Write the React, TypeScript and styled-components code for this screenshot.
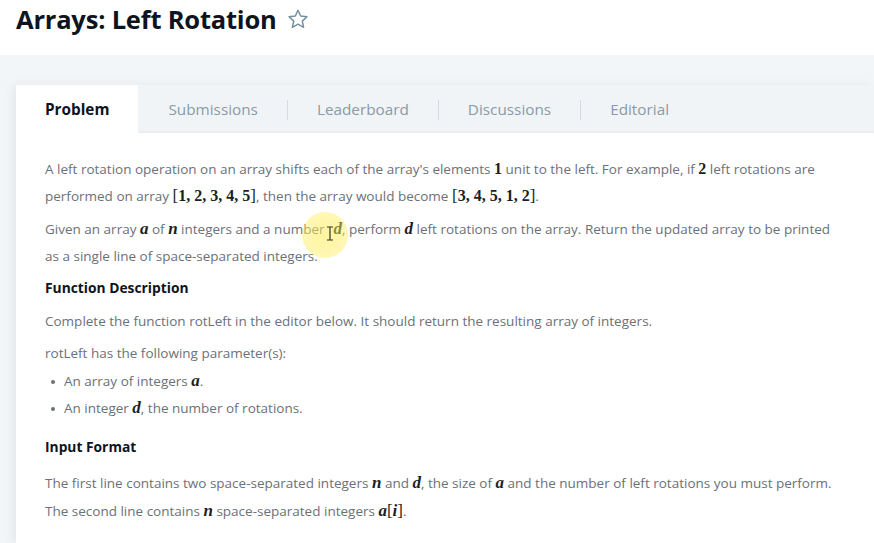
import React from "react";
import styled, { createGlobalStyle } from "styled-components";

const Global = createGlobalStyle`
  html, body { margin: 0; padding: 0; background: #f3f6f8; }
  body { font-family: "Open Sans", "Noto Sans", sans-serif; -webkit-font-smoothing: antialiased; overflow: hidden; }
`;

const Page = styled.div`
  width: 874px;
  height: 543px;
  overflow: hidden;
  display: flex;
  flex-direction: column;
  background: #f3f6f8;
`;

const Header = styled.header`
  flex: 0 0 55px;
  height: 55px;
  background: #ffffff;
  display: flex;
  align-items: flex-start;
  gap: 10px;
  padding: 2px 0 0 16px;
  box-sizing: border-box;
`;

const Title = styled.h1`
  margin: 0;
  font-size: 25.5px;
  line-height: 34px;
  font-weight: 700;
  color: #0e141e;
  letter-spacing: -0.2px;
`;

const StarBtn = styled.span`
  display: flex;
  padding-top: 6px;
  color: #738f9f;
`;

const Main = styled.main`
  flex: 1 0 auto;
  padding: 30px 0 0 16px;
  display: flex;
`;

const Panel = styled.section`
  flex: 1;
  background: #ffffff;
  box-shadow: -4px 0 10px rgba(0, 0, 0, 0.06);
  display: flex;
  flex-direction: column;
`;

const TabBar = styled.nav`
  flex: 0 0 48px;
  height: 48px;
  display: flex;
  align-items: center;
  background: #f1f4f6;
  box-shadow: inset 0 -3px 3px -2px rgba(0, 0, 0, 0.05);
`;

const Tab = styled.div<{ $active?: boolean; $sep?: boolean }>`
  position: relative;
  height: 100%;
  display: flex;
  align-items: center;
  padding: 0 29px 0 ${(p) => (p.$active ? 29 : 30)}px;
  font-size: 15.3px;
  font-weight: ${(p) => (p.$active ? 700 : 400)};
  color: ${(p) => (p.$active ? "#0e141e" : "#8a9aa6")};
  background: ${(p) => (p.$active ? "#ffffff" : "transparent")};
  &::before {
    content: "";
    display: ${(p) => (p.$sep ? "block" : "none")};
    position: absolute;
    left: 0;
    top: 15px;
    height: 20px;
    width: 1px;
    background: #d5dce1;
  }
`;

const Content = styled.div`
  padding: 23px 36px 0 29px;
  color: #6b7179;
  font-size: 13.5px;
  line-height: 27px;
`;

const Para = styled.p<{ $gap?: number }>`
  margin: 0 0 ${(p) => (p.$gap ?? 6)}px 0;
`;

const Heading = styled.h3<{ $top?: number; $bottom?: number }>`
  margin: ${(p) => (p.$top ?? 0)}px 0 ${(p) => (p.$bottom ?? 7)}px 0;
  font-size: 13.8px;
  line-height: 27px;
  font-weight: 700;
  color: #0e141e;
`;

const List = styled.ul`
  margin: 0;
  padding: 0 0 0 19px;
  list-style: none;
`;

const Item = styled.li`
  position: relative;
  &::before {
    content: "";
    position: absolute;
    left: -13px;
    top: 12px;
    width: 4px;
    height: 4px;
    border-radius: 50%;
    background: #6b7179;
  }
`;

const MathVar = styled.span`
  font-family: "Liberation Serif", "Times New Roman", serif;
  font-style: italic;
  font-weight: 700;
  font-size: 17px;
  line-height: 1;
  color: #1b1f24;
`;

const MathNum = styled.span`
  font-family: "Liberation Serif", "Times New Roman", serif;
  font-weight: 700;
  font-size: 16px;
  line-height: 1;
  color: #1b1f24;
`;

const Bracket = styled.span`
  font-family: "Liberation Serif", "Times New Roman", serif;
  font-weight: 400;
  font-size: 17px;
  line-height: 1;
  color: #1b1f24;
`;

const CursorAnchor = styled.span`
  position: relative;
  display: inline-block;
  width: 9px;
  height: 1px;
`;

const Highlight = styled.span`
  position: absolute;
  left: -23px;
  top: -21px;
  width: 46px;
  height: 46px;
  border-radius: 50%;
  background: radial-gradient(circle, rgba(255, 236, 80, 0.55) 0%, rgba(255, 238, 90, 0.45) 70%, rgba(255, 240, 120, 0) 100%);
  pointer-events: none;
`;

const IBeam = styled.svg`
  position: absolute;
  left: 1px;
  top: -7px;
`;

const Star = () => (
  <svg width="22" height="22" viewBox="0 0 24 24" fill="none" stroke="currentColor" strokeWidth="1.6" strokeLinejoin="round">
    <polygon points="12,2.5 14.9,8.8 21.8,9.6 16.7,14.3 18.1,21.1 12,17.7 5.9,21.1 7.3,14.3 2.2,9.6 9.1,8.8" />
  </svg>
);

const tabs = ["Problem", "Submissions", "Leaderboard", "Discussions", "Editorial"];

export default function App() {
  return (
    <Page>
      <Global />
      <Header>
        <Title>Arrays: Left Rotation</Title>
        <StarBtn>
          <Star />
        </StarBtn>
      </Header>
      <Main>
        <Panel>
          <TabBar>
            {tabs.map((t, i) => (
              <Tab key={t} $active={i === 0} $sep={i > 1}>
                {t}
              </Tab>
            ))}
          </TabBar>
          <Content>
            <Para $gap={6}>
              A left rotation operation on an array shifts each of the array's elements <MathNum>1</MathNum> unit to the left. For example, if{" "}
              <MathNum>2</MathNum> left rotations are performed on array{" "}
              <Bracket>[</Bracket>
              <MathNum>1, 2, 3, 4, 5</MathNum>
              <Bracket>]</Bracket>, then the array would become <Bracket>[</Bracket>
              <MathNum>3, 4, 5, 1, 2</MathNum>
              <Bracket>]</Bracket>.
            </Para>
            <Para $gap={4}>
              Given an array <MathVar>a</MathVar> of <MathVar>n</MathVar> integers and a number
              <CursorAnchor>
                <Highlight />
                <IBeam width="8" height="15" viewBox="0 0 8 15">
                  <path d="M1 1h6M4 1v13M1 14h6" stroke="#333" strokeWidth="1.2" fill="none" />
                </IBeam>
              </CursorAnchor>
              <MathVar>d</MathVar>, perform <MathVar>d</MathVar> left rotations on the array. Return the updated array to be printed as a single line
              of space-separated integers.
            </Para>
            <Heading>Function Description</Heading>
            <Para $gap={5}>Complete the function rotLeft in the editor below. It should return the resulting array of integers.</Para>
            <Para $gap={1}>rotLeft has the following parameter(s):</Para>
            <List>
              <Item>
                An array of integers <MathVar>a</MathVar>.
              </Item>
              <Item>
                An integer <MathVar>d</MathVar>, the number of rotations.
              </Item>
            </List>
            <Heading $top={11} $bottom={10}>
              Input Format
            </Heading>
            <Para $gap={1}>
              The first line contains two space-separated integers <MathVar>n</MathVar> and <MathVar>d</MathVar>, the size of{" "}
              <MathVar>a</MathVar> and the number of left rotations you must perform.
            </Para>
            <Para>
              The second line contains <MathVar>n</MathVar> space-separated integers <MathVar>a</MathVar>
              <Bracket>[</Bracket>
              <MathVar>i</MathVar>
              <Bracket>]</Bracket>.
            </Para>
          </Content>
        </Panel>
      </Main>
    </Page>
  );
}
